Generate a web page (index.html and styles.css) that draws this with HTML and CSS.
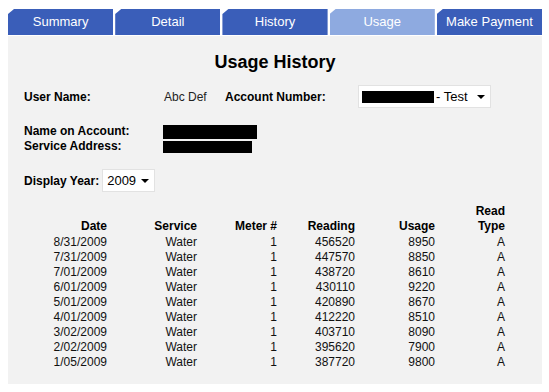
FILE: index.html
```html
<!DOCTYPE html>
<html lang="en">
<head>
  <meta charset="UTF-8" />
  <title>Usage History</title>
  <link rel="stylesheet" href="styles.css">
</head>
<body>

  <div class="tabs">
    <div class="tab">Summary</div>
    <div class="tab">Detail</div>
    <div class="tab">History</div>
    <div class="tab active">Usage</div>
    <div class="tab">Make Payment</div>
  </div>

  <div class="panel">
    <h1 class="title">Usage History</h1>

    <div class="info-row">
      <span class="label">User Name:</span>
      <span class="value">Abc Def</span>
      <span class="label">Account Number:</span>
      <div class="fake-select account-select">
        <span class="redact acct-bar"></span>
        <span class="select-text">- Test</span>
        <span class="arrow"></span>
      </div>
    </div>

    <div class="owner">
      <span class="label">Name on Account:</span>
      <span><span class="redact name-bar"></span></span>
      <span class="label">Service Address:</span>
      <span><span class="redact addr-bar"></span></span>
    </div>

    <div class="year-row">
      <span class="label">Display Year:</span>
      <div class="fake-select year-select">
        <span class="select-text">2009</span>
        <span class="arrow"></span>
      </div>
    </div>

    <table class="usage">
      <colgroup>
        <col style="width:83px"><col style="width:90px"><col style="width:80px">
        <col style="width:78px"><col style="width:80px"><col style="width:70px">
      </colgroup>
      <thead>
        <tr>
          <th>Date</th><th>Service</th><th>Meter #</th><th>Reading</th><th>Usage</th><th>Read<br>Type</th>
        </tr>
      </thead>
      <tbody>
        <tr><td>8/31/2009</td><td>Water</td><td>1</td><td>456520</td><td>8950</td><td>A</td></tr>
        <tr><td>7/31/2009</td><td>Water</td><td>1</td><td>447570</td><td>8850</td><td>A</td></tr>
        <tr><td>7/01/2009</td><td>Water</td><td>1</td><td>438720</td><td>8610</td><td>A</td></tr>
        <tr><td>6/01/2009</td><td>Water</td><td>1</td><td>430110</td><td>9220</td><td>A</td></tr>
        <tr><td>5/01/2009</td><td>Water</td><td>1</td><td>420890</td><td>8670</td><td>A</td></tr>
        <tr><td>4/01/2009</td><td>Water</td><td>1</td><td>412220</td><td>8510</td><td>A</td></tr>
        <tr><td>3/02/2009</td><td>Water</td><td>1</td><td>403710</td><td>8090</td><td>A</td></tr>
        <tr><td>2/02/2009</td><td>Water</td><td>1</td><td>395620</td><td>7900</td><td>A</td></tr>
        <tr><td>1/05/2009</td><td>Water</td><td>1</td><td>387720</td><td>9800</td><td>A</td></tr>
      </tbody>
    </table>
  </div>

</body>
</html>
```

FILE: styles.css
```css
body {
  margin: 9px 7px 0 8px;
  font-family: "Liberation Sans", Arial, sans-serif;
  font-size: 12px;
  background: #fff;
  color: #000;
}
.tabs {
  display: flex;
  gap: 2px;
  height: 26px;
  margin-bottom: 1px;
}
.tab {
  flex: 1;
  background: #3a5eb9;
  color: #fff;
  font-size: 13px;
  line-height: 26px;
  text-align: center;
  clip-path: polygon(6px 0, 100% 0, 100% 100%, 0 100%, 0 5px);
}
.tab.active {
  background: #8eaae0;
}
.panel {
  background: #f2f2f2;
  height: 348px;
  box-sizing: border-box;
  padding: 15px 16px 0 16px;
}
.title {
  margin: 0;
  font-size: 18px;
  line-height: 22px;
  text-align: center;
}
.label {
  font-weight: bold;
}
.info-row {
  display: grid;
  grid-template-columns: 140px 61px 133px 133px;
  align-items: center;
  margin-top: 12px;
  height: 23px;
}
.value {
  color: #222;
}
.fake-select {
  display: flex;
  align-items: center;
  background: #fff;
  border: 1px solid #e2e2e2;
  box-sizing: border-box;
  height: 23px;
  font-size: 13px;
  position: relative;
}
.account-select {
  padding-left: 3px;
}
.year-select {
  width: 53px;
  padding-left: 4px;
}
.select-text {
  margin-left: 2px;
}
.year-select .select-text {
  margin-left: 0;
}
.arrow {
  position: absolute;
  right: 5px;
  top: 9px;
  border-left: 4px solid transparent;
  border-right: 4px solid transparent;
  border-top: 4px solid #000;
}
.redact {
  display: inline-block;
  background: #000;
  vertical-align: middle;
}
.acct-bar {
  width: 72px;
  height: 12px;
}
.owner {
  display: grid;
  grid-template-columns: 139px auto;
  line-height: 15px;
  margin-top: 16px;
}
.name-bar {
  width: 94px;
  height: 14px;
}
.addr-bar {
  width: 89px;
  height: 12px;
}
.year-row {
  display: flex;
  align-items: center;
  gap: 3px;
  margin-top: 15px;
}
.usage {
  border-collapse: collapse;
  table-layout: fixed;
  margin-top: 12px;
  line-height: 15px;
}
.usage th,
.usage td {
  padding: 0;
  text-align: right;
  vertical-align: bottom;
}
.usage thead th {
  padding-bottom: 1px;
}
.usage td {
  color: #111;
}
```
